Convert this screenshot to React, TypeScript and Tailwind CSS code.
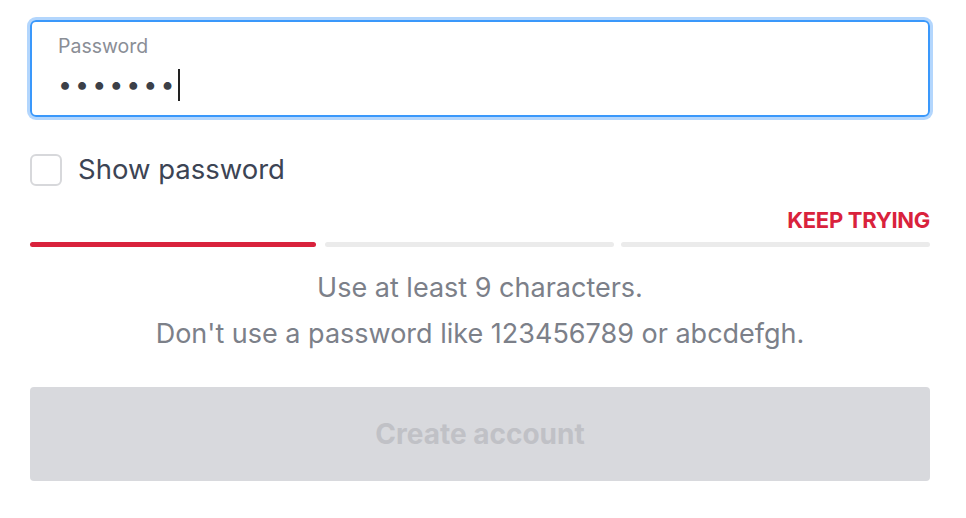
import { useState } from "react";

export default function App() {
  const [show, setShow] = useState(false);

  return (
    <div
      className="min-h-[518px] w-[966px] bg-white pl-[30px] pr-[36px] pt-[20px]"
      style={{ fontFamily: "Inter, 'Open Sans', sans-serif" }}
    >
      <div className="flex h-[97px] flex-col rounded-[6px] border-2 border-[#3a98fb] px-[26px] pt-[11px] shadow-[0_0_0_3px_#b3d6fd]">
        <label className="text-[19.5px] leading-[26px] text-[#8a8e96]">Password</label>
        <div className="mt-[9px] flex h-[34px] items-center">
          <span className="text-[25px] tracking-[3px] text-[#3c4048]">
            {show ? "letmein" : "•••••••"}
          </span>
          <span className="ml-[1px] h-[32px] w-[2px] bg-[#222]" />
        </div>
      </div>

      <label className="mt-[32px] flex items-center gap-[16px]">
        <input
          type="checkbox"
          checked={show}
          onChange={(e) => setShow(e.target.checked)}
          className="h-[32px] w-[32px] appearance-none rounded-[6px] border-2 border-[#d7d8db] bg-white"
        />
        <span className="text-[27.5px] text-[#3c4454]">Show password</span>
      </label>

      <div className="mt-[14px] flex justify-end">
        <span className="text-[22px] font-bold tracking-[-0.3px] text-[#d9223c]">KEEP TRYING</span>
      </div>

      <div className="mt-[5px] flex">
        <div className="h-[5px] w-[286px] rounded-full bg-[#d9223c]" />
        <div className="ml-[9px] h-[5px] w-[289px] rounded-full bg-[#ebebeb]" />
        <div className="ml-[7px] h-[5px] flex-1 rounded-full bg-[#ebebeb]" />
      </div>

      <div className="mt-[18px] text-center text-[27px] leading-[46px] text-[#7c8089]">
        <p>Use at least 9 characters.</p>
        <p>Don't use a password like 123456789 or abcdefgh.</p>
      </div>

      <button
        disabled
        className="mt-[30px] h-[94px] w-full rounded-[4px] bg-[#d8d9dd] text-[28px] font-bold text-[#c0c1c6]"
      >
        Create account
      </button>
    </div>
  );
}
